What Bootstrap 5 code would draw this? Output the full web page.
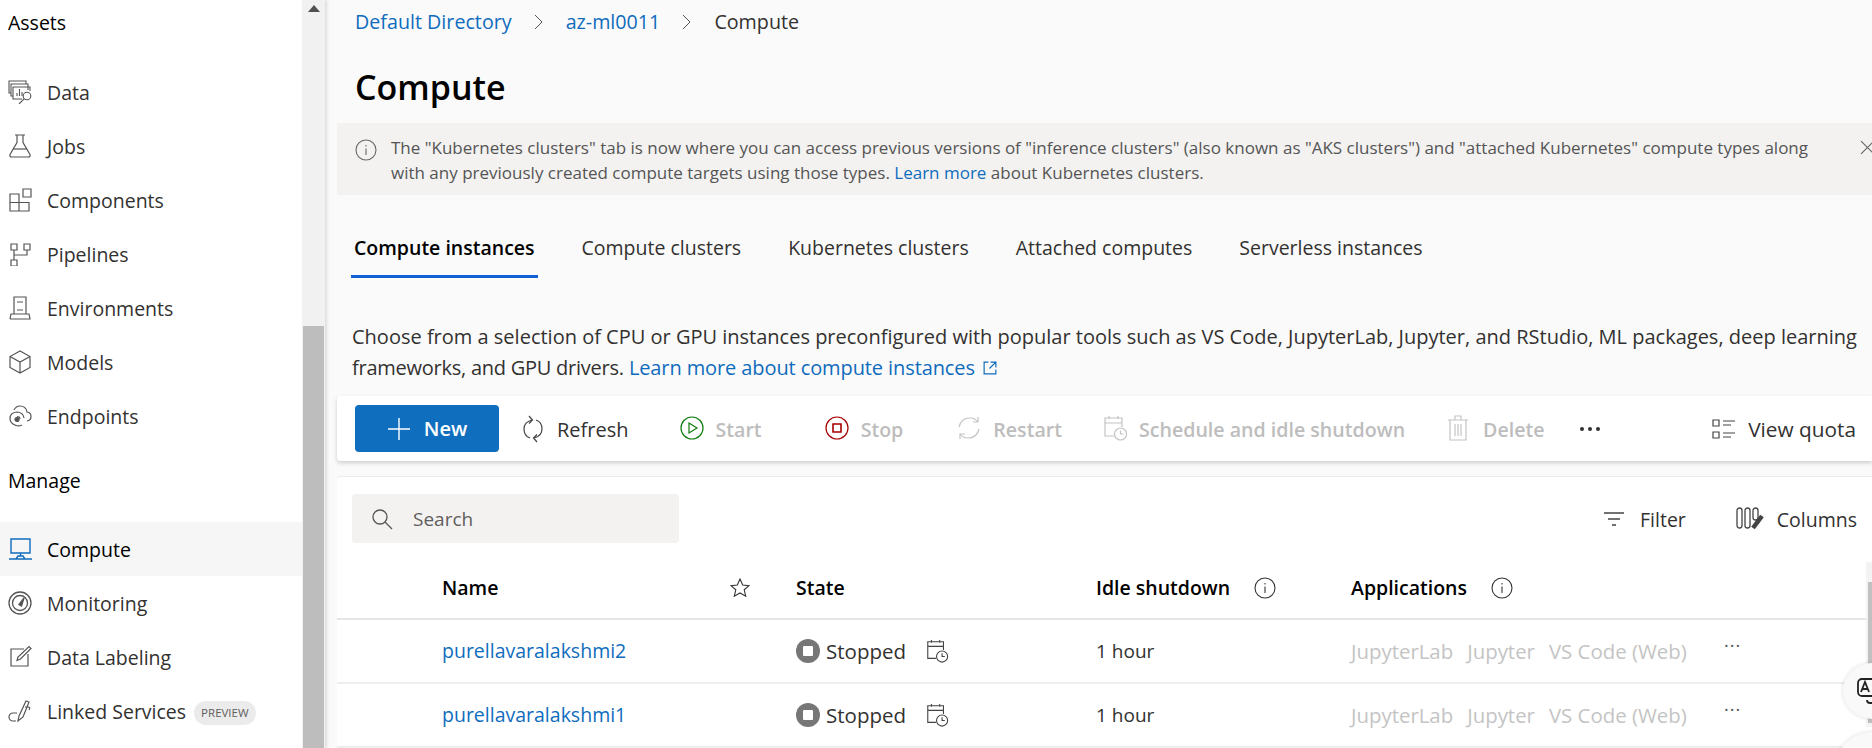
<!DOCTYPE html>
<html lang="en">
<head>
  <meta charset="UTF-8">
  <title>Compute</title>
  <link href="https://cdn.jsdelivr.net/npm/bootstrap@5.3.0/dist/css/bootstrap.min.css" rel="stylesheet">
  <style>
    html, body { height: 748px; overflow: hidden; }
    body { font-family: "Open Sans", "Noto Sans", sans-serif; font-size: 19.5px; background: #fafafa; color: #323130; }
    svg { flex-shrink: 0; display: block; }

    .app-shell { height: 748px; position: relative; overflow: hidden; }
    .side-panel { width: 302px; background: #fff; }
    .side-head { height: 54px; padding-left: 8px; color: #000; font-weight: 500; display: flex; align-items: center; }
    .side-head-first { height: 46px; margin-bottom: 19px; }
    .side-head-manage { height: 79px; padding-bottom: 3px; }
    .side-link { height: 54px; padding-left: 8px; gap: 15px; color: #323130; text-decoration: none; }
    .side-link > span { padding-top: 2px; }
    .side-link-active { background: #f6f6f6; color: #000; font-weight: 500; }
    .side-link svg { color: #555; }
    .side-link-active svg { color: #0f6cbd; }
    .side-link > .preview-tag { font-size: 11.5px; font-weight: 500; color: #605e5c; background: #ebebeb; border-radius: 12px; padding: 3px 7px; margin-left: -7px; margin-top: 4px; }

    .scroll-rail { width: 23px; background: #f1f1f1; box-shadow: 2px 0 3px rgba(0,0,0,.12); z-index: 2; }
    .scroll-up { width: 0; height: 0; border: 6px solid transparent; border-top: 0; border-bottom: 7px solid #505050; margin: 5px auto 0; }
    .scroll-thumb { width: 21px; margin: 314px auto 0; height: 422px; background: #bdbdbd; }

    .main-pane { min-width: 0; padding-left: 12px; overflow: hidden; }
    .crumb-row { height: 45px; padding-left: 18px; gap: 21px; padding-bottom: 1px; font-size: 19.7px; }
    .crumb-row a { color: #0f6cbd; text-decoration: none; }
    .page-title { font-size: 34px; font-weight: 600; color: #000; margin: 20px 0 0 18px; line-height: 44px; height: 58px; }
    .info-strip { height: 72px; background: #f3f2f1; padding: 12px 0 0 18px; gap: 14px; font-size: 17px; line-height: 25px; color: #555; position: relative; }
    .info-strip a, .desc-lines a { color: #0f6cbd; text-decoration: none; }
    .strip-close { position: absolute; right: -3px; top: 17px; color: #666; }

    .tab-row { height: 83px; padding: 38px 0 0 14px; gap: 41px; }
    .tab-item { height: 45px; padding: 0 3px; color: #323130; }
    .tab-item-on { font-weight: 600; color: #000; border-bottom: 3px solid #0f62d6; }
    .desc-lines { height: 118px; padding: 43px 0 0 15px; line-height: 31px; font-size: 20px; }
    .desc-tight { letter-spacing: -0.25px; }
    .desc-lines a { letter-spacing: -0.1px; }
    .ext-mark { display: inline; vertical-align: -1px; margin-left: 7px; }

    .tool-bar { height: 65px; background: #fff; border-radius: 4px 0 0 4px; box-shadow: 0 2px 4px rgba(0,0,0,.18); padding-left: 18px; font-size: 20px; }
    .new-btn { width: 144px; height: 47px; background: #106ebe; border-radius: 4px; color: #fff; font-weight: 600; gap: 13px; border: 0; }
    .tool-act { gap: 12px; color: #323130; font-weight: 500; }
    .tool-act span { padding-top: 2px; }
    .tool-off { color: #bdbdbd; font-weight: 600; font-size: 19.6px; }
    .act-refresh { margin-left: 22px; }
    .act-start { margin-left: 51px; }
    .act-stop { margin-left: 63px; }
    .act-restart { margin-left: 54px; }
    .act-schedule { margin-left: 41px; }
    .act-delete { margin-left: 42px; gap: 14px; }
    .act-more { margin-left: 34px; }
    .act-quota { font-size: 20.8px; }

    .list-card { background: #fff; margin-top: 15px; height: 272px; border-top: 1px solid #ececec; border-radius: 4px 0 0 0; position: relative; }
    .list-top { height: 80px; padding: 17px 15px 0 15px; }
    .search-box { width: 327px; height: 49px; background: #f3f2f1; border-radius: 4px; padding-left: 19px; gap: 20px; color: #605e5c; font-size: 19px; }
    .search-box span, .list-tool span { padding-top: 2px; }
    .list-tools { height: 49px; gap: 50px; }
    .list-tool { gap: 13px; font-weight: 500; color: #323130; }
    .list-tool-filter { gap: 15px; }

    .job-table { table-layout: fixed; width: calc(100% - 6px); margin: 0; --bs-table-bg: transparent; }
    .job-table col:nth-child(1) { width: 105px; }
    .job-table col:nth-child(2) { width: 288px; }
    .job-table col:nth-child(3) { width: 66px; }
    .job-table col:nth-child(4) { width: 300px; }
    .job-table col:nth-child(5) { width: 255px; }
    .job-table col:nth-child(6) { width: 373px; }
    .job-table th, .job-table td { padding: 0; vertical-align: middle; border-bottom: 2px solid #eee; }
    .job-table th { height: 62px; color: #000; font-weight: 600; border-bottom-color: #e6e6e6; }
    .job-table td { height: 64px; color: #323130; }
    .job-name { color: #0f6cbd; text-decoration: none; }
    .state-cell { gap: 6px; font-size: 20.5px; }
    .state-dot { width: 24px; height: 24px; border-radius: 50%; background: #767676; display: flex; align-items: center; justify-content: center; }
    .state-dot span { width: 10px; height: 10px; background: #fff; border-radius: 1px; }
    .state-sched { margin-left: 13px; }
    .hour-cell { font-size: 19px; }
    .app-links { gap: 14px; color: #c4c4c4; font-size: 20.4px; }
    .more-dots { font-size: 18px; letter-spacing: 1px; color: #555; line-height: 1; margin-top: -12px; }
    .table-scroll { position: absolute; right: 0; top: 85px; width: 6px; height: 165px; background: #f3f3f3; padding: 20px 0 0 2px; }
    .table-scroll div { height: 141px; background: #c1c1c1; }

    .float-tool { position: absolute; right: -31px; top: 663px; width: 60px; height: 56px; background: #f9f9f9; border-radius: 50%; box-shadow: 0 0 4px rgba(0,0,0,.14); padding: 15px 0 0 14px; }
    .float-tool-two { right: -37px; top: 732px; width: 74px; height: 74px; }
  </style>
</head>
<body>
<div class="app-shell d-flex">

  <!-- left nav -->
  <div class="side-panel flex-shrink-0">
    <div class="side-head side-head-first">Assets</div>
    <a class="side-link d-flex align-items-center" href="#">
      <svg width="24" height="24" viewBox="0 0 24 24" fill="none" stroke="currentColor" stroke-width="1.1"><path d="M3 13H1V1h17v3"/><path d="M5 16H3V4h17v6"/><path d="M14 19H5V7h17v4"/><path d="M9 16v-3M11.500 16V9M14 16v-4"/><circle cx="19" cy="16" r="3.800"/><path d="M16.300 18.700 11 24"/></svg>
      <span>Data</span>
    </a>
    <a class="side-link d-flex align-items-center" href="#">
      <svg width="24" height="24" viewBox="0 0 24 24" fill="none" stroke="currentColor" stroke-width="1.2"><path d="M7 1h10M9 1v7.500L2 20.500q-.8 2.500 2 2.500h16q2.800 0 2-2.500L15 8.500V1"/><path d="M5 15h14"/></svg>
      <span>Jobs</span>
    </a>
    <a class="side-link d-flex align-items-center" href="#">
      <svg width="24" height="24" viewBox="0 0 24 24" fill="none" stroke="currentColor" stroke-width="1.2"><path d="M2 6h9v17H2zM2 14.500h19V23H11"/><path d="M15 1h8v8h-8z"/></svg>
      <span>Components</span>
    </a>
    <a class="side-link d-flex align-items-center" href="#">
      <svg width="24" height="24" viewBox="0 0 24 24" fill="none" stroke="currentColor" stroke-width="1.2"><path d="M3 2h6v6H3zM16 2h6v6h-6zM3 18h6v6H3zM6 8v10M6 13h13V8"/></svg>
      <span>Pipelines</span>
    </a>
    <a class="side-link d-flex align-items-center" href="#">
      <svg width="24" height="24" viewBox="0 0 24 24" fill="none" stroke="currentColor" stroke-width="1.2"><path d="M6 1h12v17H6zM9 6h6M9 14h6M2 23h20l-1-5h-3M6 18H3l-1 5"/></svg>
      <span>Environments</span>
    </a>
    <a class="side-link d-flex align-items-center" href="#">
      <svg width="24" height="24" viewBox="0 0 24 24" fill="none" stroke="currentColor" stroke-width="1.2"><path d="M12 1 2 6.500v11L12 23l10-5.500v-11zM2 6.500l10 5.500 10-5.500M12 12v11"/></svg>
      <span>Models</span>
    </a>
    <a class="side-link d-flex align-items-center" href="#">
      <svg width="24" height="24" viewBox="0 0 24 24" fill="none" stroke="currentColor" stroke-width="1.2"><path d="M19 17q4-.5 4-4.500 0-4-4-4.500-1-6-7-6-4 0-6 4M14 21q-3 1.500-6 .5-6-2-6-7 0-6 7-6.500 6 0 7 6"/><path d="M9 12.500q3 0 3 2.500"/><circle cx="9" cy="15.500" r="2" fill="currentColor"/></svg>
      <span>Endpoints</span>
    </a>
    <div class="side-head side-head-manage">Manage</div>
    <a class="side-link side-link-active d-flex align-items-center" href="#">
      <svg width="24" height="24" viewBox="0 0 24 24" fill="none" stroke="currentColor" stroke-width="1.4"><path d="M3 2h19v14H3zM12.500 16v3M1 22h7M17 22h7M8 22l2-3h5l2 3z"/></svg>
      <span>Compute</span>
    </a>
    <a class="side-link d-flex align-items-center" href="#">
      <svg width="24" height="24" viewBox="0 0 24 24" fill="none" stroke="currentColor" stroke-width="1.3"><circle cx="12" cy="12" r="11"/><circle cx="12" cy="12" r="7.500"/><path d="M11 13.500 16 7l-2.500 8z" fill="currentColor"/></svg>
      <span>Monitoring</span>
    </a>
    <a class="side-link d-flex align-items-center" href="#">
      <svg width="24" height="24" viewBox="0 0 24 24" fill="none" stroke="currentColor" stroke-width="1.2"><path d="M16 4H3v17h17V9"/><path d="M9 15.500l1-3.500L21 1.500l2 2L12.500 14z"/></svg>
      <span>Data Labeling</span>
    </a>
    <a class="side-link d-flex align-items-center" href="#">
      <svg width="24" height="24" viewBox="0 0 24 24" fill="none" stroke="currentColor" stroke-width="1.2"><path d="M11 17 18 2l3 1-6 15-5 4zM17 8h3q3 0 1 3"/><path d="M9 14H5a4 4 0 0 0 0 8h3"/></svg>
      <span>Linked Services</span>
      <span class="preview-tag">PREVIEW</span>
    </a>
  </div>

  <div class="scroll-rail flex-shrink-0">
    <div class="scroll-up"></div>
    <div class="scroll-thumb"></div>
  </div>

  <!-- main content -->
  <div class="main-pane flex-grow-1">
    <div class="crumb-row d-flex align-items-center">
      <a href="#">Default Directory</a>
      <svg width="12" height="16" viewBox="0 0 12 16" fill="none" stroke="#555" stroke-width="1"><path d="M2 1l7 7-7 7"/></svg>
      <a href="#">az-ml0011</a>
      <svg width="12" height="16" viewBox="0 0 12 16" fill="none" stroke="#555" stroke-width="1"><path d="M2 1l7 7-7 7"/></svg>
      <span>Compute</span>
    </div>
    <h1 class="page-title">Compute</h1>

    <div class="info-strip d-flex">
      <svg class="mt-1" width="22" height="22" viewBox="0 0 22 22" fill="none" stroke="#666" stroke-width="1.1"><circle cx="11" cy="11" r="10"/><path d="M11 9.500V16M11 6v1.500"/></svg>
      <div>The "Kubernetes clusters" tab is now where you can access previous versions of "inference clusters" (also known as "AKS clusters") and "attached Kubernetes" compute types along<br>with any previously created compute targets using those types. <a href="#">Learn more</a> about Kubernetes clusters.</div>
      <svg class="strip-close" width="15" height="15" viewBox="0 0 14 14" fill="none" stroke="currentColor" stroke-width="1.1"><path d="M1 1l12 12M13 1 1 13"/></svg>
    </div>

    <div class="tab-row d-flex">
      <div class="tab-item tab-item-on">Compute instances</div>
      <div class="tab-item">Compute clusters</div>
      <div class="tab-item">Kubernetes clusters</div>
      <div class="tab-item">Attached computes</div>
      <div class="tab-item">Serverless instances</div>
    </div>

    <div class="desc-lines">Choose from a selection of CPU or GPU instances preconfigured with popular tools such as VS Code, JupyterLab, Jupyter, and RStudio, ML packages, deep learning<br><span class="desc-tight">frameworks, and GPU drivers.</span> <a class="d-inline-flex align-items-center" href="#">Learn more about compute instances<svg class="ext-mark" width="16" height="16" viewBox="0 0 15 15" fill="none" stroke="currentColor" stroke-width="1.1"><path d="M6 2H2v11h11V9M8 2h5v5M13 2 7 8"/></svg></a>
    </div>

    <div class="tool-bar d-flex align-items-center">
      <button class="new-btn d-flex align-items-center justify-content-center" type="button">
        <svg width="24" height="24" viewBox="0 0 24 24" stroke="#fff" stroke-width="1.4"><path d="M12 1v22M1 12h22"/></svg>New
      </button>
      <div class="tool-act act-refresh d-flex align-items-center">
        <svg width="24" height="28" viewBox="0 0 24 28" fill="none" stroke="#444" stroke-width="1.2"><path d="M11 5Q3 7 3 14t6 9M13 23q8-2 8-9t-6-9"/><path d="M8 1l3.500 4L8 8.500M16 27l-3.500-4 3.500-3.500"/></svg>
        <span>Refresh</span>
      </div>
      <div class="tool-act tool-off act-start d-flex align-items-center">
        <svg width="24" height="24" viewBox="0 0 24 24" fill="none" stroke="#107c10" stroke-width="1.2"><circle cx="12" cy="12" r="11"/><path d="M9 7l8 5-8 5z"/></svg>
        <span>Start</span>
      </div>
      <div class="tool-act tool-off act-stop d-flex align-items-center">
        <svg width="24" height="24" viewBox="0 0 24 24" fill="none" stroke="#a80000" stroke-width="1.2"><circle cx="12" cy="12" r="11"/><path d="M8 8h8v8H8z" stroke-width="1.6"/></svg>
        <span>Stop</span>
      </div>
      <div class="tool-act tool-off act-restart d-flex align-items-center">
        <svg width="24" height="24" viewBox="0 0 24 24" fill="none" stroke="#c4c4c4" stroke-width="1.2"><path d="M2 11Q4 2 13 2q5 0 8 4M22 13q-2 9-11 9-5 0-8-4M21 1v5h-5M3 23v-5h5"/></svg>
        <span>Restart</span>
      </div>
      <div class="tool-act tool-off act-schedule d-flex align-items-center">
        <svg width="24" height="26" viewBox="0 0 24 26" fill="none" stroke="#c4c4c4" stroke-width="1.2"><path d="M11 21H2V3h17v9M2 8h17M6 1v3M15 1v3"/><circle cx="17.500" cy="19" r="6"/><path d="M17.500 15.500V19h3"/></svg>
        <span>Schedule and idle shutdown</span>
      </div>
      <div class="tool-act tool-off act-delete d-flex align-items-center">
        <svg width="22" height="26" viewBox="0 0 22 26" fill="none" stroke="#c4c4c4" stroke-width="1.2"><path d="M1 5h20M8 5V1h6v4M3 5v20h16V5M8 9v12M11 9v12M14 9v12"/></svg>
        <span>Delete</span>
      </div>
      <svg class="act-more" width="22" height="6" viewBox="0 0 22 6" fill="#333"><circle cx="3" cy="3" r="2"/><circle cx="11" cy="3" r="2"/><circle cx="19" cy="3" r="2"/></svg>
      <div class="tool-act act-quota d-flex align-items-center ms-auto me-3">
        <svg width="24" height="22" viewBox="0 0 24 22" fill="none" stroke="#444" stroke-width="1.2"><path d="M1 2h6v6H1zM1 14h6v6H1zM11 3h12M11 7h8M11 15h12M11 19h8"/></svg>
        <span>View quota</span>
      </div>
    </div>

    <div class="list-card">
      <div class="list-top d-flex justify-content-between">
        <div class="search-box d-flex align-items-center">
          <svg width="22" height="22" viewBox="0 0 22 22" fill="none" stroke="#555" stroke-width="1.3"><circle cx="9" cy="9" r="7"/><path d="M14 14l7 7"/></svg>
          <span>Search</span>
        </div>
        <div class="list-tools d-flex align-items-center">
          <div class="list-tool list-tool-filter d-flex align-items-center">
            <svg width="22" height="16" viewBox="0 0 22 16" stroke="#444" stroke-width="1.6"><path d="M1 2h20M5 8h12M9 14h4"/></svg>
            <span>Filter</span>
          </div>
          <div class="list-tool d-flex align-items-center">
            <svg width="28" height="26" viewBox="0 0 28 26" fill="none" stroke="#444" stroke-width="1.3"><rect x="1" y="2" width="5" height="20" rx="2.500"/><rect x="9" y="2" width="5" height="20" rx="2.500"/><rect x="17" y="2" width="5" height="12" rx="2.500"/><path d="M26 10 17 22" stroke-width="4.500"/></svg>
            <span>Columns</span>
          </div>
        </div>
      </div>

      <table class="table job-table">
        <colgroup>
          <col><col><col><col><col><col><col>
        </colgroup>
        <thead>
          <tr>
            <th></th>
            <th>Name</th>
            <th><svg width="20" height="20" viewBox="0 0 20 20" fill="none" stroke="#333" stroke-width="1.1"><path d="M10 1l2.700 6 6.300.6-4.800 4.200 1.500 6.400L10 15l-5.700 3.200 1.500-6.400L1 7.600 7.300 7z"/></svg></th>
            <th>State</th>
            <th><div class="d-flex align-items-center gap-4"><span>Idle shutdown</span><svg width="22" height="22" viewBox="0 0 22 22" fill="none" stroke="#333" stroke-width="1.1"><circle cx="11" cy="11" r="10"/><path d="M11 9.500V16M11 6v1.500"/></svg></div></th>
            <th><div class="d-flex align-items-center gap-4"><span>Applications</span><svg width="22" height="22" viewBox="0 0 22 22" fill="none" stroke="#333" stroke-width="1.1"><circle cx="11" cy="11" r="10"/><path d="M11 9.500V16M11 6v1.500"/></svg></div></th>
            <th></th>
          </tr>
        </thead>
        <tbody>
          <tr>
            <td></td>
            <td><a class="job-name" href="#">purellavaralakshmi2</a></td>
            <td></td>
            <td><div class="state-cell d-flex align-items-center"><div class="state-dot"><span></span></div><span>Stopped</span>
              <svg class="state-sched" width="24" height="24" viewBox="0 0 24 26" fill="none" stroke="#444" stroke-width="1.2"><path d="M11 21H2V3h17v9M2 8h17M6 1v3M15 1v3"/><circle cx="17.500" cy="19" r="6"/><path d="M17.500 15.500V19h3"/></svg></div></td>
            <td class="hour-cell">1 hour</td>
            <td><div class="app-links d-flex"><span>JupyterLab</span><span>Jupyter</span><span>VS Code (Web)</span></div></td>
            <td><div class="more-dots">···</div></td>
          </tr>
          <tr>
            <td></td>
            <td><a class="job-name" href="#">purellavaralakshmi1</a></td>
            <td></td>
            <td><div class="state-cell d-flex align-items-center"><div class="state-dot"><span></span></div><span>Stopped</span>
              <svg class="state-sched" width="24" height="24" viewBox="0 0 24 26" fill="none" stroke="#444" stroke-width="1.2"><path d="M11 21H2V3h17v9M2 8h17M6 1v3M15 1v3"/><circle cx="17.500" cy="19" r="6"/><path d="M17.500 15.500V19h3"/></svg></div></td>
            <td class="hour-cell">1 hour</td>
            <td><div class="app-links d-flex"><span>JupyterLab</span><span>Jupyter</span><span>VS Code (Web)</span></div></td>
            <td><div class="more-dots">···</div></td>
          </tr>
        </tbody>
      </table>
      <div class="table-scroll"><div></div></div>
    </div>
  </div>

  <!-- floating helper buttons -->
  <div class="float-tool">
    <svg width="26" height="28" viewBox="0 0 26 28" fill="none" stroke="#222" stroke-width="1.8"><rect x="1" y="1" width="23" height="17" rx="4"/><path d="M4 14 8 4l4 10M5.500 11h5M10 22q0 3 3 3h6"/></svg>
  </div>
  <div class="float-tool float-tool-two"></div>
</div>

<script src="https://cdn.jsdelivr.net/npm/bootstrap@5.3.0/dist/js/bootstrap.bundle.min.js"></script>
</body>
</html>
